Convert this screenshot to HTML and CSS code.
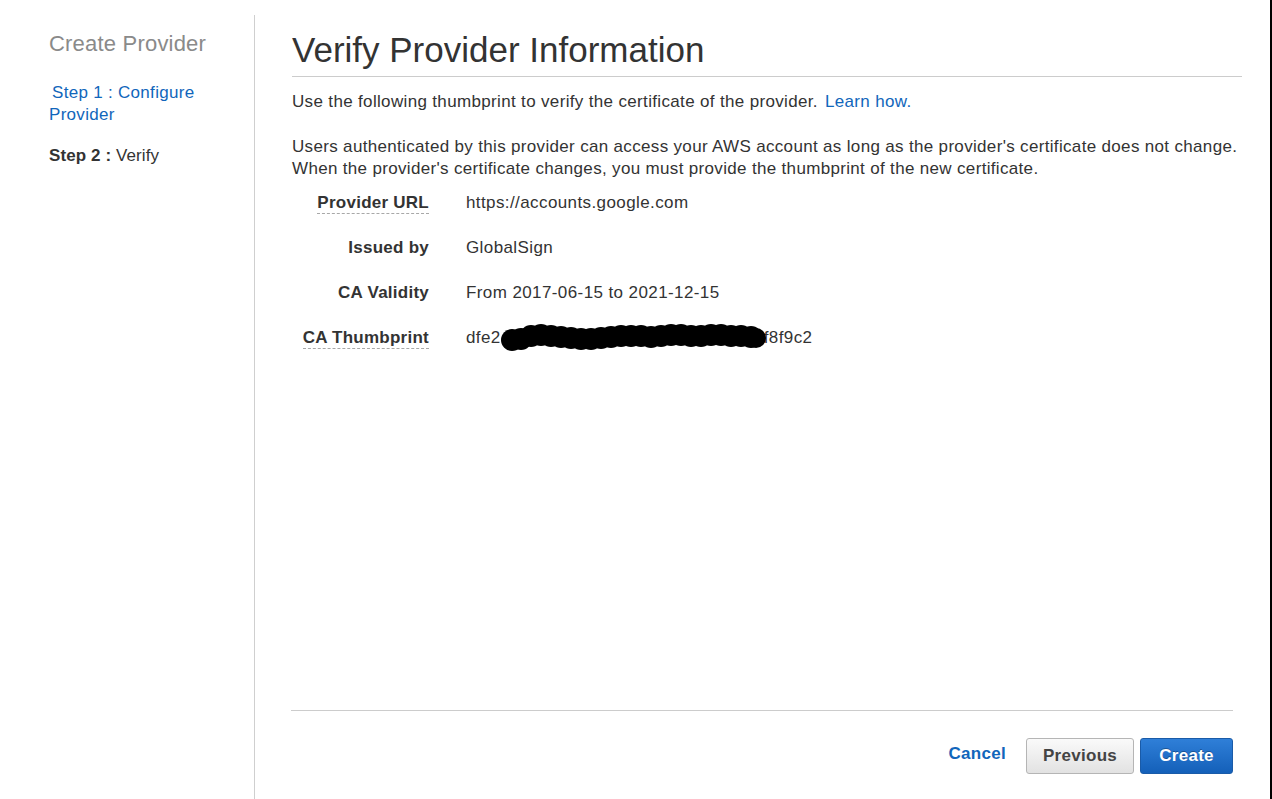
FILE: index.html
```html
<!DOCTYPE html>
<html lang="en">
<head>
<meta charset="utf-8">
<title>Verify Provider Information</title>
<link rel="stylesheet" href="styles.css">
</head>
<body>
<div class="page">
  <aside class="sidebar">
    <div class="side-title">Create Provider</div>
    <a class="side-step link" href="#">Step 1 : Configure Provider</a>
    <div class="side-step current"><b>Step 2 :</b> Verify</div>
  </aside>
  <main class="main">
    <h1 class="title">Verify Provider Information</h1>
    <p class="intro">Use the following thumbprint to verify the certificate of the provider. <a class="link" href="#">Learn how.</a></p>
    <p class="note">Users authenticated by this provider can access your AWS account as long as the provider's certificate does not change. When the provider's certificate changes, you must provide the thumbprint of the new certificate.</p>
    <div class="details">
      <div class="row">
        <div class="label"><span class="dashed">Provider URL</span></div>
        <div class="value">https://accounts.google.com</div>
      </div>
      <div class="row">
        <div class="label">Issued by</div>
        <div class="value">GlobalSign</div>
      </div>
      <div class="row">
        <div class="label">CA Validity</div>
        <div class="value">From 2017-06-15 to 2021-12-15</div>
      </div>
      <div class="row">
        <div class="label"><span class="dashed">CA Thumbprint</span></div>
        <div class="value">dfe2<svg class="redact" width="266" height="32" viewBox="0 0 266 32">
          <g fill="#000">
            <circle cx="11" cy="18" r="11"/>
            <circle cx="20" cy="17" r="11"/>
            <circle cx="30" cy="14" r="11"/>
            <circle cx="40" cy="13" r="11"/>
            <circle cx="50" cy="14" r="11"/>
            <circle cx="60" cy="15" r="11"/>
            <circle cx="70" cy="16" r="11"/>
            <circle cx="80" cy="17" r="11"/>
            <circle cx="90" cy="17" r="11"/>
            <circle cx="100" cy="16" r="11"/>
            <circle cx="110" cy="15" r="11"/>
            <circle cx="120" cy="14" r="11"/>
            <circle cx="130" cy="14" r="11"/>
            <circle cx="140" cy="14" r="11"/>
            <circle cx="150" cy="15" r="11"/>
            <circle cx="160" cy="14" r="11"/>
            <circle cx="170" cy="13" r="11"/>
            <circle cx="180" cy="13" r="11"/>
            <circle cx="190" cy="14" r="11"/>
            <circle cx="200" cy="14" r="11"/>
            <circle cx="210" cy="13" r="11"/>
            <circle cx="220" cy="13" r="11"/>
            <circle cx="230" cy="14" r="11"/>
            <circle cx="240" cy="14" r="11"/>
            <circle cx="250" cy="15" r="11"/>
            <circle cx="255" cy="16" r="10"/>
          </g>
        </svg>f8f9c2</div>
      </div>
    </div>
    <footer class="footer">
      <a class="cancel" href="#">Cancel</a>
      <button class="btn btn-secondary" type="button">Previous</button>
      <button class="btn btn-primary" type="button">Create</button>
    </footer>
  </main>
  <div class="edge"></div>
</div>
</body>
</html>
```
FILE: styles.css
```css
* {
  box-sizing: border-box;
}

html, body {
  margin: 0;
  padding: 0;
  background: #fff;
}

body {
  font-family: "Liberation Sans", Arial, Helvetica, sans-serif;
  color: #333;
  font-size: 17px;
  letter-spacing: 0.3px;
  overflow: hidden;
}

.page {
  display: flex;
  height: 799px;
}

.sidebar {
  width: 255px;
  flex: none;
  margin-top: 15px;
  padding: 16px 20px 0 49px;
  border-right: 1px solid #cfcfcf;
  display: flex;
  flex-direction: column;
  align-items: flex-start;
}

.side-title {
  font-size: 22px;
  line-height: 26px;
  color: #8a8a8a;
  letter-spacing: 0.2px;
  margin-bottom: 25px;
}

.side-step {
  font-size: 17px;
  line-height: 22px;
  display: block;
}

.link {
  color: #1166bb;
  text-decoration: none;
}

.side-step.link {
  margin-bottom: 19px;
  text-indent: 3px;
  width: 160px;
}

.current {
  color: #333;
  letter-spacing: 0.1px;
}

.current b {
  font-weight: bold;
}

.main {
  flex: 1;
  display: flex;
  flex-direction: column;
  margin-top: 15px;
  padding: 15px 28px 0 37px;
}

.title {
  margin: 0;
  font-size: 35px;
  line-height: 40px;
  font-weight: normal;
  letter-spacing: 0;
  color: #333;
  padding-bottom: 6px;
  border-bottom: 1px solid #cccccc;
}

.intro {
  margin: 14px 0 0;
  line-height: 22px;
  letter-spacing: 0.34px;
}

.intro .link {
  margin-left: 2px;
}

.note {
  margin: 23px 0 0;
  line-height: 22px;
  letter-spacing: 0.33px;
}

.details {
  display: flex;
  flex-direction: column;
}

.row {
  display: flex;
  align-items: center;
  height: 45px;
}

.label {
  width: 137px;
  text-align: right;
  font-weight: bold;
  color: #333;
  letter-spacing: 0.25px;
  flex: none;
}

.dashed {
  border-bottom: 1px dashed #a8a8a8;
  padding-bottom: 1px;
}

.value {
  margin-left: 37px;
  color: #333;
  letter-spacing: 0.4px;
  display: flex;
  align-items: center;
}

.redact {
  display: block;
  margin-right: -3px;
  position: relative;
  z-index: 1;
}

.footer {
  margin-top: auto;
  margin-right: 9px;
  margin-left: -1px;
  border-top: 1px solid #cccccc;
  padding: 27px 0 25px;
  display: flex;
  justify-content: flex-end;
  align-items: center;
}

.cancel {
  font-size: 17px;
  font-weight: bold;
  color: #1166bb;
  text-decoration: none;
  margin-right: 20px;
  margin-top: -4px;
}

.btn {
  font-family: "Liberation Sans", Arial, Helvetica, sans-serif;
  font-size: 17px;
  font-weight: bold;
  letter-spacing: 0.3px;
  height: 36px;
  border-radius: 3px;
  padding: 0;
  cursor: pointer;
}

.btn-secondary {
  width: 108px;
  color: #444;
  background: linear-gradient(#fafafa, #e2e2e2);
  border: 1px solid #b5b5b5;
}

.btn-primary {
  width: 93px;
  margin-left: 6px;
  color: #fff;
  background: linear-gradient(#2f7fd8, #1460b9);
  border: 1px solid #1a5ba8;
  text-shadow: 0 -1px 0 rgba(0, 0, 0, 0.3);
}

.edge {
  width: 2px;
  flex: none;
  background: #000;
}
```
